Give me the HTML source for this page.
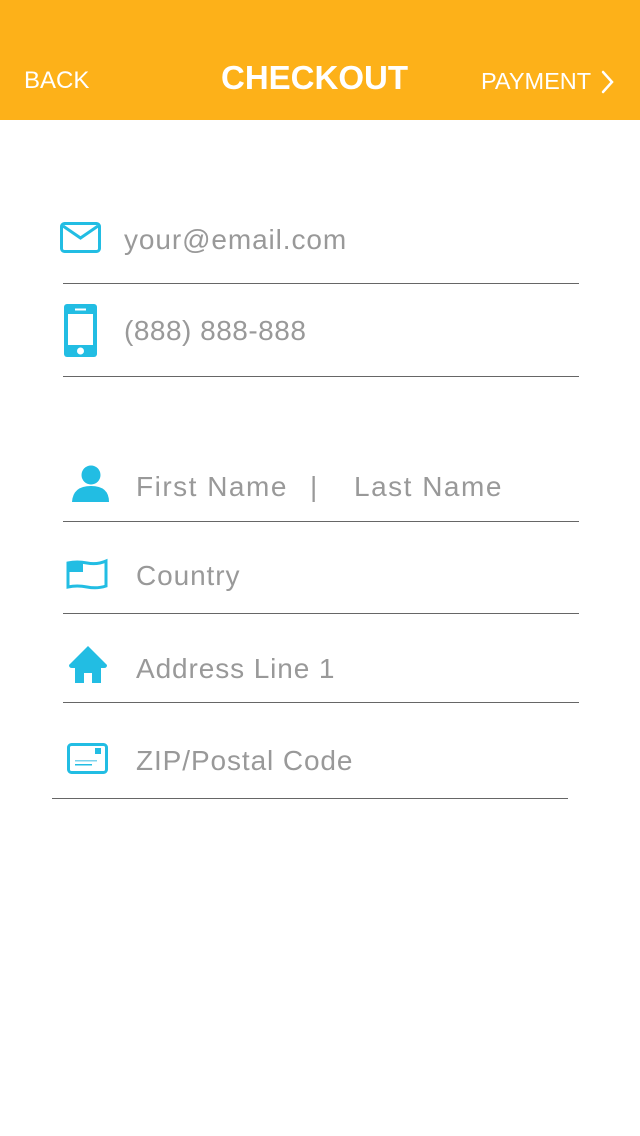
<!DOCTYPE html>
<html><head><meta charset="utf-8"><style>
body{margin:0;width:640px;height:1136px;background:#fff;position:relative;overflow:hidden;font-family:"Liberation Sans",sans-serif}
.hdr{position:absolute;left:0;top:0;width:640px;height:120px;background:#fdb119}
.hdr div{position:absolute;color:#fff;top:64px;font-size:24px;line-height:34px}
.t{position:absolute;color:#999;font-size:28px;line-height:36px;letter-spacing:0.9px}
.l{position:absolute;height:1px;background:#666}
svg{position:absolute}
</style></head><body>
<div class="hdr">
<div style="left:24px">BACK</div>
<div style="left:221px;font-size:33px;font-weight:bold;top:61px">CHECKOUT</div>
<div style="left:481px;font-size:23.5px">PAYMENT</div>
<svg style="left:601px;top:70px" width="14" height="24" viewBox="0 0 14 24"><path d="M2 2L11 12L2 22" fill="none" stroke="#fff" stroke-width="2.5" stroke-linecap="round"/></svg>
</div>

<svg style="left:60px;top:222px" width="42" height="32" viewBox="0 0 42 32"><rect x="1.5" y="1.5" width="38" height="28" rx="3" fill="none" stroke="#22bde3" stroke-width="3"/><path d="M3 4L20.5 16L38 4" fill="none" stroke="#22bde3" stroke-width="3"/></svg>
<div class="t" style="left:124px;top:222px">your@email.com</div>
<div class="l" style="left:63px;top:283px;width:516px"></div>

<svg style="left:64px;top:304px" width="34" height="54" viewBox="0 0 34 54"><rect x="0" y="0" width="33" height="53" rx="3" fill="#22bde3"/><rect x="4" y="10" width="25" height="31" fill="#fff"/><rect x="11" y="4.5" width="11" height="2" fill="#fff"/><circle cx="16.5" cy="47" r="3.5" fill="#fff"/></svg>
<div class="t" style="left:124px;top:313px;letter-spacing:0.5px">(888) 888-888</div>
<div class="l" style="left:63px;top:376px;width:516px"></div>

<svg style="left:72px;top:465px" width="38" height="37" viewBox="0 0 38 37"><circle cx="19" cy="10" r="9.5" fill="#22bde3"/><path d="M0 37Q1 21 19 21Q37 21 37 37Z" fill="#22bde3"/></svg>
<div class="t" style="left:136px;top:469px;letter-spacing:1.5px">First Name</div>
<div class="t" style="left:310px;top:469px">|</div>
<div class="t" style="left:354px;top:469px;letter-spacing:1.5px">Last Name</div>
<div class="l" style="left:63px;top:521px;width:516px"></div>

<svg style="left:65px;top:558px" width="44" height="32" viewBox="0 0 44 32"><path d="M3 5Q12 3 22 5Q32 7 41 3V28Q32 31 22 29Q12 27 3 29Z" fill="none" stroke="#22bde3" stroke-width="3"/><path d="M3 5Q10 3 18 4V14H3Z" fill="#22bde3"/></svg>
<div class="t" style="left:136px;top:558px">Country</div>
<div class="l" style="left:63px;top:613px;width:516px"></div>

<svg style="left:68px;top:645px" width="40" height="39" viewBox="0 0 40 39"><path d="M20 1L39 20Q39 23 36 23H33V38H24V28H16V38H7V23H4Q1 23 1 20Z" fill="#22bde3"/></svg>
<div class="t" style="left:136px;top:651px">Address Line 1</div>
<div class="l" style="left:63px;top:702px;width:516px"></div>

<svg style="left:67px;top:743px" width="42" height="32" viewBox="0 0 42 32"><rect x="1.5" y="1.5" width="38" height="28" rx="3" fill="none" stroke="#22bde3" stroke-width="3"/><rect x="28" y="5" width="6" height="6" fill="#22bde3"/><rect x="8" y="17" width="22" height="1.5" fill="#7dd3ec"/><rect x="8" y="21" width="17" height="1.5" fill="#22bde3"/></svg>
<div class="t" style="left:136px;top:743px">ZIP/Postal Code</div>
<div class="l" style="left:52px;top:798px;width:516px"></div>
</body></html>
